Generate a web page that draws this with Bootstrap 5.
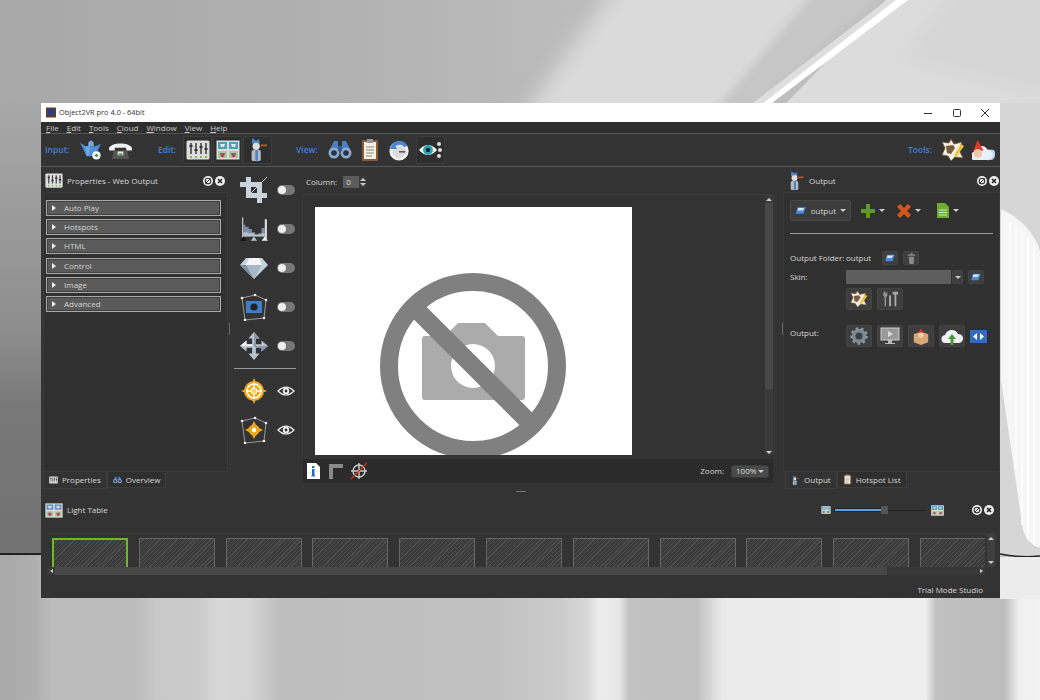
<!DOCTYPE html>
<html lang="en">
<head>
<meta charset="UTF-8">
<title>Object2VR pro 4.0 - 64bit</title>
<link href="https://cdn.jsdelivr.net/npm/bootstrap@5.3.3/dist/css/bootstrap.min.css" rel="stylesheet">
<style>
html,body{height:100%}
body{margin:0;overflow:hidden;background:#ccc;font-family:"Open Sans","Liberation Sans",sans-serif;font-size:8px;color:#d8d8d8;line-height:1}
.desk-bg{position:absolute;left:0;top:0;width:1040px;height:700px}
.svg-defs{position:absolute}
.app-win{position:absolute;left:41px;top:103px;width:959px;height:495px;background:#333;display:flex;flex-direction:column;overflow:hidden}
.title-bar{height:19px;background:#fff;color:#333;padding-left:5px;flex:none;font-size:7.4px}
.title-txt{margin-left:3px}
.win-btns{gap:16px;padding-right:9px}
.menu-bar{height:11px;background:#2e2e2e;padding-left:5px;gap:8px;flex:none;color:#ccc}
.menu-bar u{text-underline-offset:1px}
.tool-bar{height:34px;padding:0 5px 0 4px;border-top:1px solid #555;border-bottom:1px solid #555;flex:none}
.blue-lbl{color:#3f82d6;font-weight:600;font-size:8.5px}
.lbl-input{width:34px}
.lbl-edit{width:25px;margin-left:26px}
.lbl-view{width:32px;margin-left:23px}
.lbl-tools{width:33px;margin-left:auto}
.ml-6{margin-left:6px}
.ml-7{margin-left:7px}
.ml-9{margin-left:9px}
.tb-frame{width:29px;height:28px;border:1px solid #3d3d3d;border-radius:2px;background:#2e2e2e;display:flex;align-items:center;justify-content:center;margin-right:1px}
.main-row{height:321px;flex:none;position:relative}
.grip-left{position:absolute;left:188px;top:156px;width:1px;height:12px;background:#666}
.grip-right{position:absolute;left:741px;top:156px;width:1px;height:12px;background:#666}
.side-left{width:187px;flex:none;display:flex;flex-direction:column}
.tool-col{width:74px;flex:none;padding-top:3px}
.centre-col{width:473px;flex:none}
.side-right{width:217px;flex:none;margin-left:8px;display:flex;flex-direction:column}
.pane-head{height:25px;padding:2px 3px 0 4px;flex:none}
.pane-head-r{padding-right:1px}
.pane-body{flex:1;background:#303030;border:1px solid #3a3a3a;margin-left:2px;height:280px;padding-top:7px}
.pane-body-r{margin-left:0}
.round-set{gap:2px}
.acc-row{height:16px;margin:0 0 3.2px 2px;width:175px;background:#5a5a5a;border:1px solid #a8a8a8;box-shadow:inset 0 0 0 1px #404040;padding-left:5px;gap:8px;color:#d4d4d4}
.acc-arrow{width:0;height:0;border-left:4px solid #eee;border-top:3px solid transparent;border-bottom:3px solid transparent}
.tab-row{height:16px;padding-left:2px;flex:none}
.dock-tab{height:16px;padding:0 5px;gap:4px;border:1px solid #3d3d3d;border-top:0;background:#2f2f2f}
.dock-tab.on{background:#333;height:17px}
.tool-row{height:39px;padding-left:12px;gap:9px}
.tool-sep{height:1px;background:#999;margin:3px 6px 2px 6px}
.tog{width:18px;height:10px;border-radius:5px;background:#777;display:block;padding:1px}
.tog::before{content:"";display:block;width:8px;height:8px;border-radius:50%;background:#eee}
.col-row{height:27px;padding:2px 0 0 4px;gap:4px}
.spin-box{width:16px;height:12px;background:#5c5c5c;color:#ddd;padding-left:3px;display:flex;align-items:center;margin-left:2px}
.spin-btns{width:8px;height:12px;background:#3a3a3a;display:flex;flex-direction:column;justify-content:center;gap:2px;align-items:center;margin-left:-4px}
.tri-up{width:0;height:0;border-left:3px solid transparent;border-right:3px solid transparent;border-bottom:3px solid #ccc}
.tri-dn{width:0;height:0;border-left:3px solid transparent;border-right:3px solid transparent;border-top:3px solid #ccc}
.view-box{height:261px;background:#333;border:1px solid #3a3a3a;border-bottom:0;padding:12px 1px 0 12px;overflow:hidden}
.shot{width:317px;height:249px;background:#fff;flex:none;overflow:hidden}
.vbar{width:8px;height:261px;background:#3a3a3a;margin-left:auto;margin-top:-12px;display:flex;flex-direction:column;align-items:center;flex:none}
.vbar-arrow{height:8px;display:flex;align-items:center;justify-content:center;flex:none}
.vbar-thumb{width:8px;height:186px;background:#484848;flex:none}
.vbar-rest{flex:1}
.status-strip{height:24px;margin:4px 2px 0 1px;background:#2b2b2b;padding:0 4px 0 3px;gap:7px}
.combo{width:38px;height:13px;background:#4a4a4a;border:1px solid #3a3a3a;border-radius:2px;padding:0 4px;justify-content:space-between;color:#ddd}
.out-drop{width:61px;height:21px;background:#3c3c3c;border:1px solid #484848;border-radius:2px;padding:0 4px;gap:4px}
.add-ic{margin-left:10px}
.del-ic{margin-left:12px}
.doc-ic{margin-left:16px}
.hr-line{height:1px;background:#9a9a9a;margin:12px 6px 0 6px}
.form-line{padding-left:6px}
.lbl-w{width:56px}
.row-folder{margin-top:17px}
.row-skin{margin-top:5px}
.row-tools{margin-top:4px;padding-left:62px;gap:5px}
.row-output{margin-top:15px}
.output-set{gap:5px}
.folder-btn{margin-left:11px}
.trash-btn{margin-left:5px}
.mini-btn{width:16px;height:14px;background:#3e3e3e;border:1px solid #444;border-radius:2px;display:flex;align-items:center;justify-content:center}
.mini-arrow{width:11px;margin-left:1px}
.skin-folder{margin-left:5px}
.big-btn{width:26px;height:22px;background:#3e3e3e;border:1px solid #444;border-radius:2px;display:flex;align-items:center;justify-content:center}
.skin-box{width:105px;height:14px;background:#5e5e5e}
.lt-head{height:26px;margin:9px 0 10px;padding:0 6px 0 4px;flex:none;position:relative}
.grip-h{position:absolute;left:475px;top:-6px;width:10px;height:1px;background:#777}
.strip-wrap{height:43px;margin:0 5px 0 6px;flex:none;position:relative;border-top:1px solid #3a3a3a}
.thumb-row{height:33px;padding:4px 0 0 5px;gap:10.8px;overflow:hidden;width:938px}
.thumb-cell{width:76px;height:40px;flex:none;border:1px solid #666;background:repeating-linear-gradient(135deg,#3a3a3a 0 2px,#4e4e4e 2px 3px)}
.thumb-cell.sel{border:2px solid #70b82a}
.hbar{height:8px;width:938px;background:#414141}
.hbar-end{width:8px;height:8px;background:#3a3a3a;display:flex;align-items:center;justify-content:center}
.tri-l{width:0;height:0;border-top:2px solid transparent;border-bottom:2px solid transparent;border-right:3px solid #ccc}
.tri-r{width:0;height:0;border-top:2px solid transparent;border-bottom:2px solid transparent;border-left:3px solid #ccc}
.hbar-thumb{flex:1;background:#484848}
.hbar-rest{width:90px;background:#383838}
.vbar-small{position:absolute;right:0;top:0;width:8px;height:33px;background:#3e3e3e;display:flex;flex-direction:column;justify-content:space-between;align-items:center;padding:3px 0}
.slide-set{margin-left:4px}
.slide-track{width:38px;height:1px;background:#222}
.slide-on{width:46px;height:2px;background:#5aa0e6;box-shadow:0 0 0 1px #222}
.slide-knob{width:7px;height:8px;background:#555}
.round-gap{margin-left:27px}
.status-foot{height:16px;padding-right:17px;margin-top:6px;color:#d8d8d8}
</style>
</head>
<body>
<svg class="desk-bg" viewBox="0 0 1040 700" preserveAspectRatio="none">
<defs>
<linearGradient id="wallGr" x1="0" y1="0" x2="1" y2="0"><stop offset="0" stop-color="#a8a8a8"/><stop offset=".3" stop-color="#b0b0b0"/><stop offset=".55" stop-color="#bcbcbc"/><stop offset="1" stop-color="#c0c0c0"/></linearGradient>
<linearGradient id="leftGr" x1="0" y1="0" x2="0" y2="1"><stop offset="0" stop-color="#a8a8a8"/><stop offset=".5" stop-color="#8e8e8e"/><stop offset=".68" stop-color="#787878"/><stop offset="1" stop-color="#727272"/></linearGradient>
<linearGradient id="floorGr" x1="0" y1="0" x2="1" y2="0">
<stop offset="0" stop-color="#a8a8a8"/><stop offset=".035" stop-color="#b0b0b0"/><stop offset=".05" stop-color="#bcbcbc"/><stop offset=".13" stop-color="#bcbcbc"/><stop offset=".15" stop-color="#c8c8c8"/><stop offset=".19" stop-color="#cacaca"/><stop offset=".21" stop-color="#d8d8d8"/><stop offset=".24" stop-color="#d4d4d4"/><stop offset=".27" stop-color="#bebebe"/><stop offset=".47" stop-color="#c0c0c0"/><stop offset=".54" stop-color="#cccccc"/><stop offset=".565" stop-color="#d8d8d8"/><stop offset=".575" stop-color="#ececec"/><stop offset=".595" stop-color="#e8e8e8"/><stop offset=".605" stop-color="#c2c2c2"/><stop offset=".67" stop-color="#c0c0c0"/><stop offset=".695" stop-color="#eaeaea"/><stop offset=".89" stop-color="#eeeeee"/><stop offset=".9" stop-color="#c0c0c0"/><stop offset=".965" stop-color="#bcbcbc"/><stop offset=".98" stop-color="#f0f0f0"/><stop offset="1" stop-color="#f2f2f2"/></linearGradient>
<filter id="softB" x="-20%" y="-20%" width="140%" height="140%"><feGaussianBlur stdDeviation="10"/></filter>
<filter id="softC" x="-20%" y="-20%" width="140%" height="140%"><feGaussianBlur stdDeviation="4"/></filter>
</defs>
<rect width="1040" height="700" fill="url(#wallGr)"/>
<polygon points="620,-20 830,-20 730,120 520,120" fill="#dadada" filter="url(#softB)"/>
<polygon points="820,-10 890,-10 753,110 715,110" fill="#c6c6c6" filter="url(#softC)"/>
<polygon points="905,-20 1060,-20 1060,120 770,120" fill="#dcdcdc"/>
<polygon points="960,-20 1060,-20 1060,100 900,60" fill="#d6d6d6" filter="url(#softB)"/>
<polygon points="887,0 897,0 763,103 753,103" fill="#dedede"/>
<polygon points="896,0 908,0 772,103 763,103" fill="#fff"/>
<rect y="100" width="42" height="455" fill="url(#leftGr)"/>
<rect x="1000" y="103" width="40" height="455" fill="#d6d6d6"/>
<path d="M1001 209Q1030 222 1040 250L1040 548Q1028 545 1023 530L1001 380Z" fill="#f6f6f6"/>
<g stroke="#fff" stroke-width="1.500"><path d="M1010 222V400M1016 226V470M1022 232V525M1028 238V540M1034 244V545"/></g>
<rect y="556" width="1040" height="144" fill="url(#floorGr)"/>
<rect y="553" width="42" height="2" fill="#222"/>
<path d="M1000 554Q1020 558 1040 556" stroke="#222" stroke-width="1.500" fill="none"/>
<rect x="1000" y="557" width="40" height="42" fill="#ececec"/>
</svg>

<svg width="0" height="0" class="svg-defs">
<defs>
<symbol id="ic-sliders" viewBox="0 0 24 20"><rect x=".5" y=".5" width="23" height="19" rx="1.500" fill="#ddd"/><g stroke="#444" stroke-width="1.600"><path d="M5 3v11M10 3v11M15 3v11M20 3v11"/></g><g fill="#333"><rect x="3.500" y="5" width="3" height="2"/><rect x="8.500" y="9" width="3" height="2"/><rect x="13.500" y="6" width="3" height="2"/><rect x="18.500" y="8" width="3" height="2"/></g><g fill="#6a3"><circle cx="5" cy="17" r="1"/><circle cx="10" cy="17" r="1"/><circle cx="15" cy="17" r="1"/><circle cx="20" cy="17" r="1"/></g></symbol>
<symbol id="ic-tiles" viewBox="0 0 24 20"><rect x=".5" y=".5" width="23" height="19" fill="#ddd"/><rect x="2" y="2" width="9" height="7" fill="#4f9fbf"/><rect x="13" y="2" width="9" height="7" fill="#4f9fbf"/><rect x="2" y="11" width="9" height="7" fill="#9fce98"/><rect x="13" y="11" width="9" height="7" fill="#9fce98"/><path d="M4 4h5l-1 3H5zM15 4h5l-1 3h-3z" fill="#dbe8f5"/><path d="M4 13h5l-1 4H5zM15 13h5l-1 4h-3z" fill="#c23a6a"/></symbol>
<symbol id="ic-figure" viewBox="0 0 24 28"><path d="M6 1l4 3 3-2 1 5H5z" fill="#4d86c8"/><circle cx="10" cy="10" r="4" fill="#ddd"/><rect x="5" y="14" width="10" height="12" rx="2" fill="#bbb"/><path d="M9 14h3v10l-1.500 3-1.500-3z" fill="#4d86c8"/><rect x="15" y="8" width="7" height="2" fill="#c2552a"/></symbol>
<symbol id="ic-pot" viewBox="0 0 24 22"><path d="M0 3l6 4h11l6-3-4 8-2 6H7L4 11z" fill="#4f8fd8"/><path d="M9 3l3-3 3 3v4H9z" fill="#7aa8de"/><path d="M6 7h5l-1 10H7z" fill="#6ea5e4"/><circle cx="18" cy="17" r="4.500" fill="#fff"/><path d="M16 16.200h1.200V15h1.600v1.200H20v1.600h-1.200V19h-1.600v-1.200H16z" fill="#3a9a3a"/></symbol>
<symbol id="ic-phone" viewBox="0 0 24 20"><path d="M0 7C3 1 21 1 24 7v3h-6V7H6v3H0z" fill="#f2f2f2"/><path d="M5 10h14l2 9H3z" fill="#555"/><rect x="9" y="11" width="6" height="4" fill="#e8e8e8"/><rect x="10" y="13" width="4" height="2" fill="#4a4"/></symbol>
<symbol id="ic-bino" viewBox="0 0 24 20"><path d="M6 1h4v8H2zM14 1h4l4 8h-8z" fill="#4a7fc0"/><circle cx="6" cy="13" r="5.500" fill="#8fa9cb"/><circle cx="18" cy="13" r="5.500" fill="#8fa9cb"/><circle cx="6" cy="13" r="2.800" fill="#26334d"/><circle cx="18" cy="13" r="2.800" fill="#26334d"/><rect x="10" y="6" width="4" height="5" fill="#2f5d99"/></symbol>
<symbol id="ic-clip" viewBox="0 0 18 24"><rect x="1" y="2" width="16" height="21" rx="1" fill="#8b5a3a"/><rect x="3" y="4" width="12" height="17" fill="#f3f0e6"/><rect x="6" y="1" width="6" height="4" fill="#999"/><g stroke="#888"><path d="M5 9h8M5 12h8M5 15h8M5 18h6"/></g></symbol>
<symbol id="ic-dial" viewBox="0 0 24 24"><circle cx="12" cy="13" r="10.500" fill="#f0f0f0"/><circle cx="12" cy="14" r="7" fill="#dcdcdc"/><path d="M3 9A10 10 0 0 1 21 7l-3 2A7 7 0 0 0 8 8l2 3H2z" fill="#4a86cc"/><path d="M12 14h7" stroke="#444" stroke-width="1.500"/></symbol>
<symbol id="ic-eye" viewBox="0 0 24 20"><path d="M0 10Q9 0 18 10Q9 20 0 10z" fill="#fff"/><circle cx="9" cy="10" r="5" fill="#2aa6b8"/><circle cx="9" cy="10" r="2.200" fill="#123"/><g fill="#ddd"><circle cx="20" cy="4" r="2"/><circle cx="21" cy="10" r="2"/><circle cx="20" cy="16" r="2"/></g></symbol>
<symbol id="ic-star" viewBox="0 0 24 24"><path d="M10 1l3 5 8-2-3 8 4 8-8-1-4 4-3-5-6-1 3-7-3-6 7 1z" fill="#f5efdf" stroke="#6e5034" stroke-width=".8"/><path d="M5 8l7-1 2 3-4 6-4-1z" fill="#7a5a3a"/><path d="M20 6l3 2-7 10-3 1 1-3z" fill="#eec23a"/></symbol>
<symbol id="ic-gnome" viewBox="0 0 24 22"><path d="M1 21a5 5 0 0 1 2-9 7 7 0 0 1 13-2 5.500 5.500 0 0 1 2 11z" fill="#e8f1fa"/><path d="M16 21a5 5 0 0 0 2-10 4 4 0 0 1 6 5 5 5 0 0 1-3 5z" fill="#b9d4f0"/><path d="M1 12L6 0l6 11z" fill="#dd3a2a"/><circle cx="6" cy="14" r="4.500" fill="#eccaa8"/></symbol>
<symbol id="ic-crop" viewBox="0 0 28 28"><path d="M6 1h5v16h16v5H6zM0 6h22v21h-5V11H0z" fill="#c7d2da"/><path d="M11 17L27 1" stroke="#ccc"/></symbol>
<symbol id="ic-hist" viewBox="0 0 26 24"><path d="M2 1h1v20H2zM23 3h2v18h-2z" fill="#ddd"/><path d="M3 19V8h2v2h3v2h3v3h3v2h3v-1h3v-5h3v8z" fill="#7d8fa1"/><path d="M3 19v-4h4v1h6v1h7v-1h3v3z" fill="#b4c0cb"/><path d="M0 23l3-4 3 4z" fill="#111"/><path d="M10 23l3-4 3 4z" fill="#b4c0cb"/><path d="M20 23l3-4 3 4z" fill="#eee"/></symbol>
<symbol id="ic-gem" viewBox="0 0 28 22"><path d="M6 1h16l6 7-14 14L0 8z" fill="#c8d2da"/><path d="M9 1h10l3 7H6z" fill="#f4f6f8"/><path d="M6 8h16l-8 14z" fill="#a8b8c6"/><path d="M0 8h6l8 14z" fill="#7d90a0"/></symbol>
<symbol id="ic-persp" viewBox="0 0 28 28"><path d="M2 5l13-3 11 5-2 18-19 2z" fill="#333" stroke="#999"/><rect x="6" y="8" width="16" height="12" fill="#3f7ec8"/><circle cx="14" cy="14" r="3.600" fill="#222"/><g fill="#eee"><circle cx="2" cy="5" r="1.300"/><circle cx="15" cy="2" r="1.300"/><circle cx="26" cy="7" r="1.300"/><circle cx="24" cy="25" r="1.300"/><circle cx="5" cy="27" r="1.300"/></g></symbol>
<symbol id="ic-move" viewBox="0 0 30 30"><path d="M15 0l6 7h-4v6h6V9l7 6-7 6v-4h-6v6h4l-6 7-6-7h4v-6H7v4l-7-6 7-6v4h6V7H9z" fill="#b9c5cf"/><path d="M15 15V0l6 7h-4v8zM15 15h15l-7 6v-4h-6z" fill="#8698a8"/><path d="M0 15l7-6v4h6v2z" fill="#eef2f5"/></symbol>
<symbol id="ic-target" viewBox="0 0 26 26"><path d="M13 0l2 5h-4zM13 26l-2-5h4zM0 13l5-2v4zM26 13l-5 2v-4z" fill="#f0b028"/><circle cx="13" cy="13" r="10" fill="#f0a81e"/><circle cx="13" cy="13" r="7" fill="none" stroke="#fff" stroke-width="1.500"/><path d="M13 5v16M5 13h16" stroke="#fff" stroke-width="1.500"/><circle cx="13" cy="13" r="3" fill="#f7d27a" stroke="#fff"/></symbol>
<symbol id="ic-ptarget" viewBox="0 0 28 28"><path d="M2 5l13-3 11 5-2 18-19 2z" fill="#333" stroke="#999"/><path d="M14 5l2 4h-4zM14 23l-2-4h4zM5 14l4-2v4zM23 14l-4 2v-4z" fill="#eda71e"/><circle cx="14" cy="14" r="5.500" fill="#eda71e"/><circle cx="14" cy="14" r="2.200" fill="#fff"/><g fill="#eee"><circle cx="2" cy="5" r="1.300"/><circle cx="15" cy="2" r="1.300"/><circle cx="26" cy="7" r="1.300"/><circle cx="24" cy="25" r="1.300"/><circle cx="5" cy="27" r="1.300"/></g></symbol>
<symbol id="ic-watch" viewBox="0 0 18 12"><path d="M1 6Q9-2 17 6Q9 14 1 6z" fill="none" stroke="#eee" stroke-width="1.200"/><circle cx="9" cy="6" r="3.200" fill="#eee"/><circle cx="9" cy="6" r="1.400" fill="#333"/></symbol>
<symbol id="ic-folder" viewBox="0 0 14 10"><path d="M3 1h10L10 9H1z" fill="#4a8ad8"/><path d="M4 2h7L9 5H3z" fill="#d8e8f8"/></symbol>
<symbol id="ic-trash" viewBox="0 0 10 12"><rect x="1" y="1.500" width="8" height="1.500" fill="#888"/><rect x="4" y="0" width="2" height="2" fill="#888"/><path d="M2 4h6l-.6 8H2.600z" fill="#888"/></symbol>
<symbol id="ic-gear" viewBox="0 0 20 20"><circle cx="10" cy="10" r="6" fill="none" stroke="#7f8a98" stroke-width="4"/><circle cx="10" cy="10" r="8.500" fill="none" stroke="#8e98a5" stroke-width="2.400" stroke-dasharray="3 3"/></symbol>
<symbol id="ic-screen" viewBox="0 0 20 18"><rect x="1" y="1" width="18" height="12" fill="#999" stroke="#ccc"/><path d="M8 4l5 3-5 3z" fill="#ddd"/><path d="M8 13h4v3h3v1H5v-1h3z" fill="#bbb"/></symbol>
<symbol id="ic-box" viewBox="0 0 20 20"><path d="M2 8l8-3 8 3v9l-8 3-8-3z" fill="#d8a878"/><path d="M10 1l3 6H7z" fill="#cc3a2a"/><circle cx="10" cy="9" r="3" fill="#f0d0b0"/></symbol>
<symbol id="ic-upload" viewBox="0 0 22 18"><path d="M5 16a4 4 0 0 1-1-8 7 7 0 0 1 13-1 4.500 4.500 0 0 1 1 9z" fill="#eef2f6"/><path d="M11 7l4 5h-2.500v6h-3v-6H7z" fill="#4a9a3a"/></symbol>
<symbol id="ic-tools" viewBox="0 0 20 20"><path d="M3 2l2 0 0 3 2-3v4l-1.500 2v10H4V8L2.500 6z" fill="#999"/><rect x="9" y="6" width="2.200" height="12" fill="#aaa"/><path d="M13 2h6v3h-2v13h-2V5h-2z" fill="#aaa"/></symbol>
<symbol id="ic-float" viewBox="0 0 10 10"><circle cx="5" cy="5" r="5" fill="#eee"/><circle cx="5" cy="5" r="2.800" fill="none" stroke="#333" stroke-width="1.100"/><path d="M2.500 7.500l5-5" stroke="#333"/></symbol>
<symbol id="ic-shut" viewBox="0 0 10 10"><circle cx="5" cy="5" r="5" fill="#eee"/><path d="M3 3l4 4M7 3l-4 4" stroke="#222" stroke-width="1.500"/></symbol>
</defs>
</svg>

<div class="app-win">
  <div class="title-bar d-flex align-items-center">
    <svg width="10" height="11" viewBox="0 0 11 11"><rect width="11" height="11" fill="#5a4028"/><circle cx="5.500" cy="5" r="3.600" fill="#2a3c90"/></svg>
    <span class="title-txt">Object2VR pro 4.0 - 64bit</span>
    <div class="ms-auto d-flex align-items-center win-btns">
      <svg width="12" height="10" viewBox="0 0 12 10"><path d="M1 5.500h8" stroke="#333"/></svg>
      <svg width="12" height="10" viewBox="0 0 12 10"><rect x="2.500" y="1.500" width="7" height="7" rx="1" fill="none" stroke="#333"/></svg>
      <svg width="12" height="10" viewBox="0 0 12 10"><path d="M2 1l8 8M10 1l-8 8" stroke="#333"/></svg>
    </div>
  </div>
  <div class="menu-bar d-flex align-items-center">
    <span><u>F</u>ile</span><span><u>E</u>dit</span><span><u>T</u>ools</span><span><u>C</u>loud</span><span><u>W</u>indow</span><span><u>V</u>iew</span><span><u>H</u>elp</span>
  </div>
  <div class="tool-bar d-flex align-items-center">
    <span class="blue-lbl lbl-input">Input:</span>
    <svg width="24" height="20"><use href="#ic-pot"/></svg>
    <svg width="23" height="19" class="ml-6"><use href="#ic-phone"/></svg>
    <span class="blue-lbl lbl-edit">Edit:</span>
    <div class="tb-frame"><svg width="24" height="20"><use href="#ic-sliders"/></svg></div>
    <div class="tb-frame"><svg width="24" height="20"><use href="#ic-tiles"/></svg></div>
    <div class="tb-frame"><svg width="22" height="26"><use href="#ic-figure"/></svg></div>
    <span class="blue-lbl lbl-view">View:</span>
    <svg width="24" height="20"><use href="#ic-bino"/></svg>
    <svg width="18" height="24" class="ml-9"><use href="#ic-clip"/></svg>
    <svg width="22" height="22" class="ml-9"><use href="#ic-dial"/></svg>
    <div class="tb-frame ml-6"><svg width="24" height="20"><use href="#ic-eye"/></svg></div>
    <span class="blue-lbl lbl-tools">Tools:</span>
    <svg width="24" height="24"><use href="#ic-star"/></svg>
    <svg width="23" height="21" class="ml-7"><use href="#ic-gnome"/></svg>
  </div>

  <div class="main-row d-flex">
    <div class="side-left">
      <div class="pane-head d-flex align-items-center">
        <svg width="18" height="15"><use href="#ic-sliders"/></svg>
        <span class="ms-1">Properties - Web Output</span>
        <div class="ms-auto d-flex round-set"><svg width="10" height="10"><use href="#ic-float"/></svg><svg width="10" height="10"><use href="#ic-shut"/></svg></div>
      </div>
      <div class="pane-body">
        <div class="acc-row d-flex align-items-center"><span class="acc-arrow"></span>Auto Play</div>
        <div class="acc-row d-flex align-items-center"><span class="acc-arrow"></span>Hotspots</div>
        <div class="acc-row d-flex align-items-center"><span class="acc-arrow"></span>HTML</div>
        <div class="acc-row d-flex align-items-center"><span class="acc-arrow"></span>Control</div>
        <div class="acc-row d-flex align-items-center"><span class="acc-arrow"></span>Image</div>
        <div class="acc-row d-flex align-items-center"><span class="acc-arrow"></span>Advanced</div>
      </div>
      <div class="tab-row d-flex">
        <div class="dock-tab on d-flex align-items-center"><svg width="9" height="8"><use href="#ic-sliders"/></svg>Properties</div>
        <div class="dock-tab d-flex align-items-center"><svg width="9" height="8"><use href="#ic-bino"/></svg>Overview</div>
      </div>
    </div>

    <div class="tool-col">
      <div class="tool-row d-flex align-items-center"><svg width="28" height="28"><use href="#ic-crop"/></svg><span class="tog"></span></div>
      <div class="tool-row d-flex align-items-center"><svg width="28" height="26"><use href="#ic-hist"/></svg><span class="tog"></span></div>
      <div class="tool-row d-flex align-items-center"><svg width="28" height="22"><use href="#ic-gem"/></svg><span class="tog"></span></div>
      <div class="tool-row d-flex align-items-center"><svg width="28" height="28"><use href="#ic-persp"/></svg><span class="tog"></span></div>
      <div class="tool-row d-flex align-items-center"><svg width="28" height="28"><use href="#ic-move"/></svg><span class="tog"></span></div>
      <div class="tool-sep"></div>
      <div class="tool-row d-flex align-items-center"><svg width="28" height="26"><use href="#ic-target"/></svg><svg width="18" height="12"><use href="#ic-watch"/></svg></div>
      <div class="tool-row d-flex align-items-center"><svg width="28" height="28"><use href="#ic-ptarget"/></svg><svg width="18" height="12"><use href="#ic-watch"/></svg></div>
    </div>

    <div class="centre-col">
      <div class="col-row d-flex align-items-center">
        <span>Column:</span>
        <span class="spin-box">0</span>
        <span class="spin-btns"><span class="tri-up"></span><span class="tri-dn"></span></span>
      </div>
      <div class="view-box d-flex">
        <div class="shot">
          <svg width="317" height="249" viewBox="0 0 317 249">
            <path d="M107 132a3 3 0 0 1 3-3h20l13-13h27l13 13h24a3 3 0 0 1 3 3v58a3 3 0 0 1-3 3H110a3 3 0 0 1-3-3z" fill="#ababab"/>
            <circle cx="158" cy="159" r="22" fill="#fff"/>
            <circle cx="158" cy="159" r="84" fill="none" stroke="#808080" stroke-width="18"/>
            <path d="M98 99l120 120" stroke="#808080" stroke-width="18"/>
          </svg>
        </div>
        <div class="vbar">
          <div class="vbar-arrow"><span class="tri-up"></span></div>
          <div class="vbar-thumb"></div>
          <div class="vbar-rest"></div>
          <div class="vbar-arrow"><span class="tri-dn"></span></div>
        </div>
      </div>
      <div class="status-strip d-flex align-items-center">
        <svg width="15" height="18" viewBox="0 0 15 18"><path d="M1 1h9l4 4v12H1z" fill="#fff"/><rect x="6" y="4" width="2.500" height="2" fill="#2a6bc0"/><path d="M6 7h2.500v6l1 1.500h-4.500l1-1.500z" fill="#2a6bc0"/></svg>
        <svg width="15" height="16" viewBox="0 0 15 16"><path d="M1 1h14v4H5v11H1z" fill="#8a8a8a"/></svg>
        <svg width="18" height="18" viewBox="0 0 18 18"><circle cx="9" cy="9" r="6" fill="none" stroke="#ccc" stroke-width="1.400"/><path d="M9 1v16M1 9h16" stroke="#ccc" stroke-width="1.400"/><path d="M1 17L17 1" stroke="#d0381a" stroke-width="1.200"/></svg>
        <span class="ms-auto">Zoom:</span>
        <div class="combo d-flex align-items-center"><span>100%</span><span class="tri-dn"></span></div>
      </div>
    </div>

    <div class="side-right">
      <div class="pane-head pane-head-r d-flex align-items-center">
        <svg width="18" height="22"><use href="#ic-figure"/></svg>
        <span class="ms-1">Output</span>
        <div class="ms-auto d-flex round-set"><svg width="10" height="10"><use href="#ic-float"/></svg><svg width="10" height="10"><use href="#ic-shut"/></svg></div>
      </div>
      <div class="pane-body pane-body-r">
        <div class="d-flex align-items-center form-line">
          <div class="out-drop d-flex align-items-center"><svg width="16" height="11"><use href="#ic-folder"/></svg><span>output</span><span class="tri-dn"></span></div>
          <svg width="14" height="14" viewBox="0 0 14 14" class="add-ic"><path d="M5 0h4v5h5v4H9v5H5V9H0V5h5z" fill="#5e9a24"/></svg><span class="tri-dn ms-1"></span>
          <svg width="14" height="14" viewBox="0 0 14 14" class="del-ic"><path d="M3 0l4 4 4-4 3 3-4 4 4 4-3 3-4-4-4 4-3-3 4-4-4-4z" fill="#d6561e"/></svg><span class="tri-dn ms-1"></span>
          <svg width="12" height="15" viewBox="0 0 12 15" class="doc-ic"><path d="M0 0h8l4 4v11H0z" fill="#6bae2c"/><path d="M2 7h8M2 9.500h8M2 12h8" stroke="#d6ecc0"/></svg><span class="tri-dn ms-1"></span>
        </div>
        <div class="hr-line"></div>
        <div class="d-flex align-items-center form-line row-folder">
          <span class="lbl-w">Output Folder:</span><span>output</span>
          <span class="mini-btn folder-btn"><svg width="12" height="8"><use href="#ic-folder"/></svg></span>
          <span class="mini-btn trash-btn"><svg width="9" height="11"><use href="#ic-trash"/></svg></span>
        </div>
        <div class="d-flex align-items-center form-line row-skin">
          <span class="lbl-w">Skin:</span>
          <span class="skin-box"></span>
          <span class="mini-btn mini-arrow"><span class="tri-dn"></span></span>
          <span class="mini-btn skin-folder"><svg width="12" height="8"><use href="#ic-folder"/></svg></span>
        </div>
        <div class="d-flex form-line row-tools">
          <span class="big-btn"><svg width="20" height="18"><use href="#ic-star"/></svg></span>
          <span class="big-btn"><svg width="20" height="18"><use href="#ic-tools"/></svg></span>
        </div>
        <div class="d-flex form-line align-items-start row-output">
          <span class="lbl-w pt-1">Output:</span>
          <div class="d-flex output-set align-items-center">
            <span class="big-btn"><svg width="20" height="18"><use href="#ic-gear"/></svg></span>
            <span class="big-btn"><svg width="20" height="18"><use href="#ic-screen"/></svg></span>
            <span class="big-btn"><svg width="20" height="18"><use href="#ic-box"/></svg></span>
            <span class="big-btn"><svg width="22" height="18"><use href="#ic-upload"/></svg></span>
            <svg width="17" height="13" viewBox="0 0 17 13"><rect width="17" height="13" fill="#2f6cc0"/><path d="M7 3v7L3 6.500zM10 3v7l4-3.500z" fill="#fff"/></svg>
          </div>
        </div>
      </div>
      <div class="tab-row d-flex">
        <div class="dock-tab on d-flex align-items-center"><svg width="9" height="11"><use href="#ic-figure"/></svg>Output</div>
        <div class="dock-tab d-flex align-items-center"><svg width="9" height="11"><use href="#ic-clip"/></svg>Hotspot List</div>
      </div>
    </div>
    <span class="grip-left"></span><span class="grip-right"></span>
  </div>

  <div class="lt-head d-flex align-items-center">
    <span class="grip-h"></span>
    <svg width="18" height="15"><use href="#ic-tiles"/></svg>
    <span class="ms-1">Light Table</span>
    <div class="ms-auto d-flex align-items-center">
      <svg width="10" height="8"><use href="#ic-tiles"/></svg>
      <div class="d-flex align-items-center slide-set"><span class="slide-on"></span><span class="slide-knob"></span><span class="slide-track"></span></div>
      <svg width="15" height="11" class="ms-1"><use href="#ic-tiles"/></svg>
      <div class="d-flex round-set round-gap"><svg width="10" height="10"><use href="#ic-float"/></svg><svg width="10" height="10"><use href="#ic-shut"/></svg></div>
    </div>
  </div>
  <div class="strip-wrap">
    <div class="thumb-row d-flex">
      <div class="thumb-cell sel"></div><div class="thumb-cell"></div><div class="thumb-cell"></div><div class="thumb-cell"></div><div class="thumb-cell"></div><div class="thumb-cell"></div><div class="thumb-cell"></div><div class="thumb-cell"></div><div class="thumb-cell"></div><div class="thumb-cell"></div><div class="thumb-cell"></div>
    </div>
    <div class="hbar d-flex"><span class="hbar-end"><span class="tri-l"></span></span><span class="hbar-thumb"></span><span class="hbar-rest"></span><span class="hbar-end"><span class="tri-r"></span></span></div>
    <div class="vbar-small"><span class="tri-up"></span><span class="tri-dn"></span></div>
  </div>
  <div class="status-foot d-flex align-items-center justify-content-end">Trial Mode Studio</div>
</div>
<script src="https://cdn.jsdelivr.net/npm/bootstrap@5.3.3/dist/js/bootstrap.bundle.min.js"></script>
</body>
</html>
